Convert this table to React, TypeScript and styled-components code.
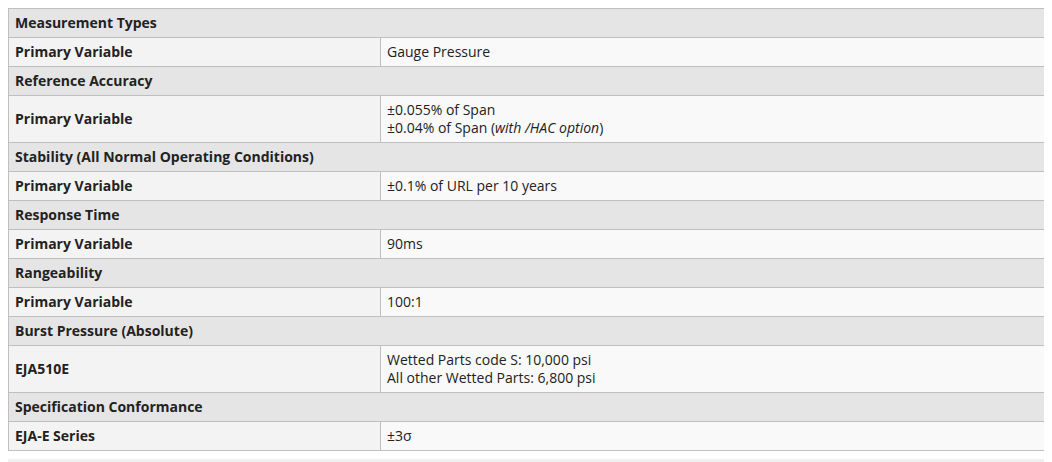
import React from "react";
import styled, { createGlobalStyle } from "styled-components";

const Global = createGlobalStyle`
  body {
    margin: 8px;
    font-family: "Open Sans", "Noto Sans", sans-serif;
    font-size: 14px;
    color: #222;
    background: #fff;
  }
`;

const Table = styled.table`
  width: 1037px;
  border-collapse: collapse;
  border: 1px solid #bfbfbf;
  font-size: 14px;
  line-height: 18px;
`;

const HeaderCell = styled.th`
  background: #e5e5e5;
  text-align: left;
  font-weight: 700;
  padding: 5px 6px;
  border: 1px solid #bfbfbf;
`;

const LabelCell = styled.th`
  background: #f3f3f3;
  text-align: left;
  font-weight: 700;
  padding: 5px 6px;
  width: 359px;
  border: 1px solid #bfbfbf;
`;

const ValueCell = styled.td`
  background: #f9f9f9;
  padding: 5px 6px;
  border: 1px solid #bfbfbf;
`;

const Line = styled.div``;

const Footer = styled.div`
  margin-top: 8px;
  height: 4px;
  background: #f0f0f0;
`;

type Section = { title: string; label: string; values: React.ReactNode[] };

const sections: Section[] = [
  { title: "Measurement Types", label: "Primary Variable", values: ["Gauge Pressure"] },
  {
    title: "Reference Accuracy",
    label: "Primary Variable",
    values: [
      "±0.055% of Span",
      <>±0.04% of Span (<em>with /HAC option</em>)</>,
    ],
  },
  { title: "Stability (All Normal Operating Conditions)", label: "Primary Variable", values: ["±0.1% of URL per 10 years"] },
  { title: "Response Time", label: "Primary Variable", values: ["90ms"] },
  { title: "Rangeability", label: "Primary Variable", values: ["100:1"] },
  {
    title: "Burst Pressure (Absolute)",
    label: "EJA510E",
    values: ["Wetted Parts code S: 10,000 psi", "All other Wetted Parts: 6,800 psi"],
  },
  { title: "Specification Conformance", label: "EJA-E Series", values: ["±3σ"] },
];

export default function App() {
  return (
    <>
      <Global />
      <Table>
        <tbody>
          {sections.map((s) => (
            <React.Fragment key={s.title}>
              <tr>
                <HeaderCell colSpan={2}>{s.title}</HeaderCell>
              </tr>
              <tr>
                <LabelCell>{s.label}</LabelCell>
                <ValueCell>
                  {s.values.map((v, i) => (
                    <Line key={i}>{v}</Line>
                  ))}
                </ValueCell>
              </tr>
            </React.Fragment>
          ))}
        </tbody>
      </Table>
      <Footer />
    </>
  );
}
